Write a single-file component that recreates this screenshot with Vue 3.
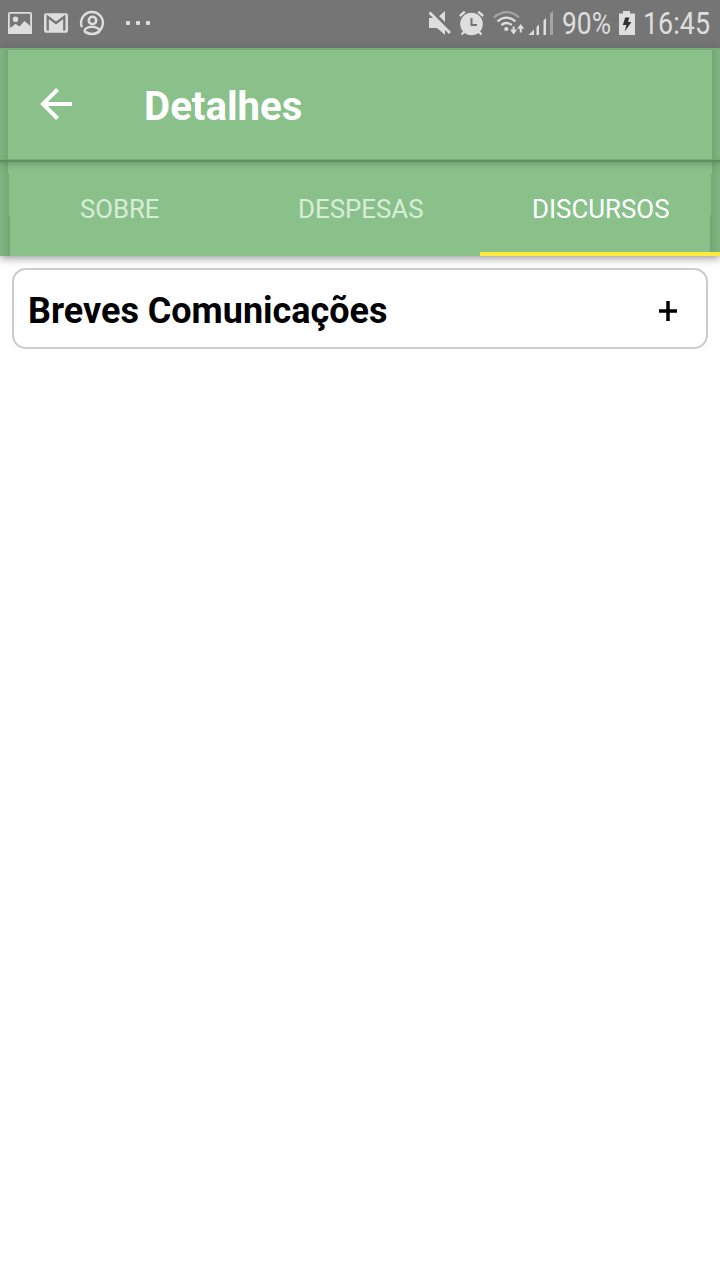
<script setup>
const tabs = [
  { label: 'SOBRE', width: 79.5, inset: 1 },
  { label: 'DESPESAS', width: 125.5, inset: 2 },
  { label: 'DISCURSOS', width: 137.5, inset: 2, active: true },
]
</script>

<template>
  <div class="screen">
    <header class="status">
      <svg width="160" height="48" viewBox="0 0 160 48" fill="none">
        <path fill="#dedede" fill-rule="evenodd" d="M10 12h20a2 2 0 0 1 2 2v20H8V14a2 2 0 0 1 2-2zm-.2 1.800v14l2.200-1 3.500-3 4 2.700 5-5.500 5.700 5V13.800zM15.500 16.500a2.800 2.800 0 1 1 0 5.600 2.800 2.800 0 0 1 0-5.600z" />
        <rect x="44" y="13.300" width="24" height="19.400" rx="2" fill="#dedede" />
        <path stroke="#757575" stroke-width="2.300" d="M47.700 30.500V16.800l8.300 6.200 8.300-6.200v13.700" />
        <g stroke="#dedede" stroke-width="2.400">
          <path d="M82 27.300A10.900 10.900 0 1 1 86 32" />
          <circle cx="92.500" cy="20.500" r="3.700" stroke-width="2.600" />
          <ellipse cx="92" cy="30.500" rx="7.400" ry="3.600" />
        </g>
        <g fill="#dedede"><rect x="126" y="21" width="4" height="4" rx="1" /><rect x="136" y="21" width="4" height="4" rx="1" /><rect x="146" y="21" width="4" height="4" rx="1" /></g>
      </svg>
      <svg width="300" height="48" viewBox="420 0 300 48" fill="none">
        <path fill="#dedede" d="M429 18h8l8-7v24l-8-7h-8z" />
        <path stroke="#757575" stroke-width="5" d="M430.500 11L451 31.500" />
        <path stroke="#dedede" stroke-width="2.800" d="M429.500 12.500L450 33" />
        <circle cx="471.500" cy="24" r="11.300" fill="#dedede" />
        <path stroke="#dedede" stroke-width="2.400" d="M459.800 16l5-4.300M483.200 16l-5-4.300M465 31l-3.500 3.500M478 31l3.500 3.500" />
        <path stroke="#757575" stroke-width="2" d="M471.500 18v7h5.500" />
        <path stroke="#a5a5a5" stroke-width="2.200" d="M494 17.300Q506.500 6.800 519 17.300" />
        <path stroke="#dedede" stroke-width="2.300" d="M497.500 21.300Q506.500 14 515.500 21.300M501.300 25Q506.500 21 511.700 25" />
        <circle cx="506.300" cy="29" r="2.100" fill="#dedede" />
        <path stroke="#dedede" stroke-width="2" d="M513.600 26.500v6M520.700 32.500V26" />
        <path fill="#dedede" d="M510 29.600h7.200l-3.600 4.900zM517.100 28.800h7.200l-3.600-4.900zM528.500 35l5.500-5.500V35z" />
        <path fill="#dedede" d="M536.500 27l2.500-2.500V35h-2.500zM543.500 20.500l2.500-2.500V35h-2.500z" />
        <path fill="#a5a5a5" d="M550 13.500l3-2.500v24h-3z" />
        <text x="562" y="34" textLength="49" lengthAdjust="spacingAndGlyphs">90%</text>
        <path fill="#dedede" d="M619 13.500h4v-2.500h7v2.500h5V35h-16z" />
        <path fill="#333" d="M625.200 17.500h4.300l-1.500 4.500h3.500l-6.800 9.500 1.700-6.500h-3.600z" />
        <text x="643" y="34" textLength="67" lengthAdjust="spacingAndGlyphs">16:45</text>
      </svg>
    </header>
    <div class="bar title-bar">
      <svg class="back" width="32" height="32" viewBox="0 0 32 32"><path fill="none" stroke="#fff" stroke-width="4" d="M32 16H4M17.500 1.500L3 16 17.500 30.500" /></svg>
      <h1><svg width="170" height="56"><text x="0" y="43" textLength="158.500" lengthAdjust="spacingAndGlyphs">Detalhes</text></svg></h1>
    </div>
    <nav class="bar tabs">
      <button v-for="tab in tabs" :key="tab.label" :class="{ active: tab.active }">
        <svg :width="tab.width + 2.5" height="40"><text :x="tab.inset" y="29" :textLength="tab.width" lengthAdjust="spacingAndGlyphs">{{ tab.label }}</text></svg>
      </button>
    </nav>
    <main>
      <section class="card">
        <h2><svg width="370" height="60"><text x="0" y="44" textLength="359.500" lengthAdjust="spacingAndGlyphs">Breves Comunicações</text></svg></h2>
        <svg class="plus" width="18" height="20" viewBox="0 0 18 20"><path stroke="#000" stroke-width="3.500" d="M0 10h18M9 0v20" /></svg>
      </section>
    </main>
  </div>
</template>

<style>
body { background: #fff; }
</style>
<style scoped>
.screen { width: 720px; height: 1280px; overflow: hidden; background: #fefefe; font-family: Roboto, sans-serif; }
svg { display: block; }
.status { height: 48px; background: #757575; display: flex; justify-content: space-between; }
.status text { font-size: 31px; fill: #dedede; }
.bar { position: relative; box-sizing: border-box; background: #8ac18b; }
.bar::before, .bar::after { content: ''; position: absolute; top: 0; bottom: 0; width: 8px; }
.bar::before { left: 0; background: linear-gradient(90deg, #7fb580, #73a874); }
.bar::after { right: 0; background: linear-gradient(270deg, #7fb580, #73a874); }
.title-bar { z-index: 2; height: 112px; display: flex; align-items: center; padding-left: 40px; border-top: 2px solid #7aaf7b; border-bottom: 1px solid #75a976; box-shadow: 0 2px 1px #5e8e60, 0 3px 8px rgba(0, 0, 0, .25); }
.back { margin-top: -1px; }
h1, h2 { margin: 0; }
h1 { margin-left: 72px; }
h1 text { font-size: 40px; font-weight: 700; fill: #fff; }
.tabs { z-index: 1; height: 96px; display: grid; grid-template-columns: repeat(3, 1fr); box-shadow: 0 2px 8px rgba(0, 0, 0, .42); }
.tabs::before { width: 10px; clip-path: polygon(0 0, 80% 0, 80% 14%, 90% 14%, 90% 58%, 100% 58%, 100% 100%, 0 100%); }
.tabs::after { width: 10px; bottom: 4px; clip-path: polygon(20% 0, 100% 0, 100% 100%, 0 100%, 0 60%, 10% 60%, 10% 15%, 20% 15%); }
button { display: flex; justify-content: center; align-items: center; border: 0; padding: 2px 0 0; background: none; font-family: inherit; }
button text { font-size: 26px; fill: #d8edd8; }
.active { box-shadow: inset 0 -4px #ffeb3b; }
.active text { fill: #fff; }
main { padding: 12px; }
.card { box-sizing: border-box; height: 81px; border: 2px solid #ccc; border-radius: 14px; background: #fff; display: flex; align-items: center; justify-content: space-between; padding: 0 29px 0 14px; }
h2 text { font-size: 36px; font-weight: 700; }
.plus { margin-top: 5px; }
</style>
